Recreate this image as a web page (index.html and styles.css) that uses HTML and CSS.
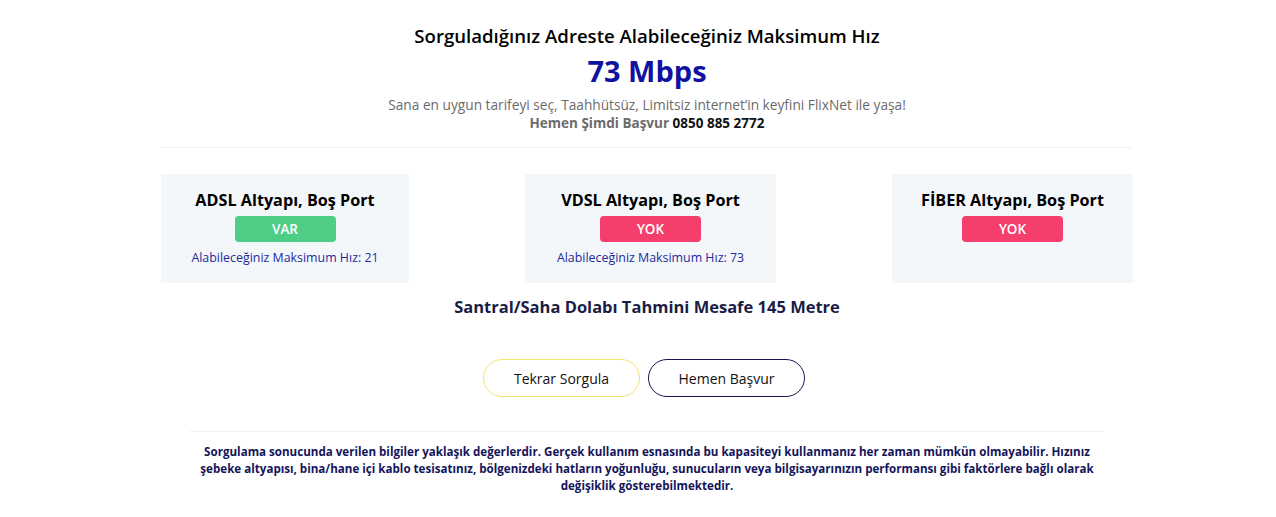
FILE: index.html
```html
<!DOCTYPE html>
<html lang="tr">
<head>
<meta charset="utf-8">
<link rel="stylesheet" href="styles.css">
</head>
<body>
<div class="page">
  <header class="head">
    <h1 class="title">Sorguladığınız Adreste Alabileceğiniz Maksimum Hız</h1>
    <div class="speed">73 Mbps</div>
    <p class="sub">Sana en uygun tarifeyi seç, Taahhütsüz, Limitsiz internet’in keyfini FlixNet ile yaşa!</p>
    <p class="call">Hemen Şimdi Başvur <span class="phone">0850 885 2772</span></p>
  </header>
  <hr class="rule">
  <section class="cards">
    <div class="card">
      <h3 class="card-title">ADSL Altyapı, Boş Port</h3>
      <span class="badge badge-yes">VAR</span>
      <p class="card-note">Alabileceğiniz Maksimum Hız: 21</p>
    </div>
    <div class="card card-mid">
      <h3 class="card-title">VDSL Altyapı, Boş Port</h3>
      <span class="badge badge-no">YOK</span>
      <p class="card-note">Alabileceğiniz Maksimum Hız: 73</p>
    </div>
    <div class="card card-last">
      <h3 class="card-title">FİBER Altyapı, Boş Port</h3>
      <span class="badge badge-no">YOK</span>
    </div>
  </section>
  <h2 class="distance">Santral/Saha Dolabı Tahmini Mesafe 145 Metre</h2>
  <div class="actions">
    <a class="btn btn-yellow">Tekrar Sorgula</a>
    <a class="btn btn-navy">Hemen Başvur</a>
  </div>
  <div class="notes">
    <hr class="rule">
    <p class="disclaimer">Sorgulama sonucunda verilen bilgiler yaklaşık değerlerdir. Gerçek kullanım esnasında bu kapasiteyi kullanmanız her zaman mümkün olmayabilir. Hızınız şebeke altyapısı, bina/hane içi kablo tesisatınız, bölgenizdeki hatların yoğunluğu, sunucuların veya bilgisayarınızın performansı gibi faktörlere bağlı olarak değişiklik gösterebilmektedir.</p>
  </div>
</div>
</body>
</html>
```

FILE: styles.css
```css
* { box-sizing: border-box; }
body {
  margin: 0;
  padding-left: 18px;
  background: #fff;
  font-family: "Open Sans", "DejaVu Sans", sans-serif;
  color: #000;
}
.page {
  width: 972px;
  margin: 0 auto;
  padding-top: 24px;
}
.head { text-align: center; }
.title {
  margin: 0;
  font-size: 18.6px;
  font-weight: 600;
  line-height: 24px;
}
.speed {
  margin-top: 5px;
  font-size: 29px;
  font-weight: 700;
  line-height: 36px;
  color: #1212a0;
}
.sub {
  margin: 6px 0 0;
  font-size: 13.7px;
  line-height: 19px;
  color: #6b6b6b;
}
.call {
  margin: 0;
  font-size: 13.5px;
  line-height: 19px;
  font-weight: 700;
  color: #6b6b6b;
}
.phone { color: #111; }
.rule {
  margin: 0;
  border: 0;
  border-top: 1px solid #f1f1f3;
}
.head + .rule { margin-top: 14px; }
.cards {
  display: flex;
  justify-content: space-between;
  margin-top: 26px;
}
.card {
  width: 248px;
  height: 109px;
  background: #f4f7fa;
  display: flex;
  flex-direction: column;
  align-items: center;
  padding-top: 15px;
}
.card-mid { width: 251px; }
.card-last { width: 241px; }
.card-title {
  margin: 0;
  font-size: 16.2px;
  font-weight: 700;
  line-height: 22px;
}
.badge {
  margin-top: 5px;
  width: 101px;
  height: 26px;
  border-radius: 4px;
  color: #fff;
  font-size: 13.5px;
  font-weight: 600;
  line-height: 26px;
  text-align: center;
}
.badge-yes { background: #4ecd87; }
.badge-no { background: #f43f6c; }
.card-note {
  margin: 8px 0 0;
  font-size: 12.4px;
  line-height: 16px;
  color: #1c2a9c;
}
.distance {
  margin: 13px 0 0;
  text-align: center;
  font-size: 16.5px;
  font-weight: 700;
  line-height: 22px;
  color: #1b1d45;
}
.actions {
  display: flex;
  justify-content: center;
  gap: 8px;
  margin-top: 41px;
  padding-right: 6px;
}
.btn {
  width: 157px;
  height: 38px;
  border-radius: 19px;
  border: 1px solid;
  display: flex;
  align-items: center;
  justify-content: center;
  font-size: 14px;
  color: #111;
  text-decoration: none;
}
.btn-yellow { border-color: #f3e26c; }
.btn-navy { border-color: #16164f; }
.notes {
  margin: 34px 29px 0;
}
.disclaimer {
  margin: 11px 0 0;
  text-align: center;
  font-size: 11.6px;
  font-weight: 700;
  line-height: 17px;
  color: #14145a;
}
```
